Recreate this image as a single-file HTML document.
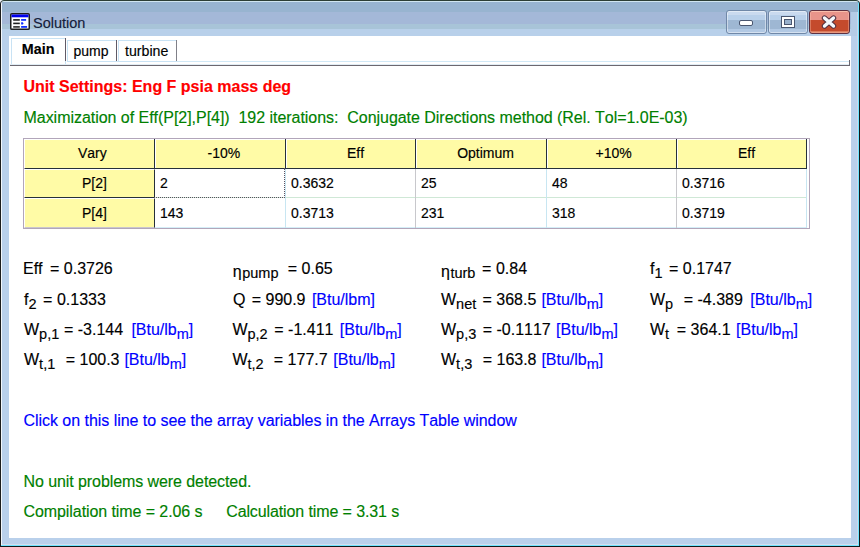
<!DOCTYPE html>
<html><head><meta charset="utf-8">
<style>
*{margin:0;padding:0;box-sizing:border-box}
html,body{width:860px;height:547px;overflow:hidden;background:#f4f4f4}
body{position:relative;font-family:"Liberation Sans",sans-serif;color:#000;font-variant-ligatures:none;font-kerning:none}
.abs{position:absolute}
.t{position:absolute;white-space:pre;font-size:16px;line-height:20px;-webkit-text-stroke:0.15px currentColor}
.tt{position:absolute;white-space:pre;font-size:14px;line-height:16px;-webkit-text-stroke:0.15px currentColor}
.g{color:#008000}
.b{color:#0000ff}
.sub{font-size:14.5px;position:relative;top:4px}
.eta{font-size:16px;position:relative;top:3px;margin-right:0.5px}
</style></head><body>
<div class="abs" style="left:0;top:0;width:860px;height:547px;border-radius:4px 4px 0 0;overflow:hidden;background:#b9d0eb">
<div class="abs" style="left:1px;top:2px;width:858px;height:10px;background:#98b4d0"></div>
<div class="abs" style="left:1px;top:12px;width:850px;height:12px;background:#a4b8d8"></div>
<div class="abs" style="left:1px;top:24px;width:850px;height:5px;background:#a8c4d8"></div>
<div class="abs" style="left:1px;top:29px;width:850px;height:7px;background:#b8d0ea"></div>
<div class="abs" style="left:851px;top:12px;width:8px;height:24px;background:#b4cce6"></div>
<div class="abs" style="left:1px;top:1px;width:858px;height:1px;background:#d0e6f0"></div>
<div class="abs" style="left:1px;top:2px;width:1px;height:544px;background:#f2f7fc"></div>
<div class="abs" style="left:858px;top:2px;width:1px;height:544px;background:#70e4ff"></div>
<div class="abs" style="left:857px;top:12px;width:1px;height:532px;background:#cad8ec"></div>
<div class="abs" style="left:1px;top:545px;width:858px;height:1px;background:#70e4ff"></div>
<div class="abs" style="left:2px;top:544px;width:856px;height:1px;background:#d4dcec"></div>
<div class="abs" style="left:0;top:0;width:860px;height:547px;border:1px solid;border-color:#2c3e34 #101818 #101818 #1c1c1c;border-radius:4px 4px 0 0"></div>
</div>
<div class="abs" style="left:9px;top:36px;width:842px;height:502px;background:#fff"></div>
<svg class="abs" style="left:10px;top:13px" width="20" height="17" viewBox="0 0 20 17">
<rect x="0.75" y="0.75" width="18.5" height="15.5" rx="1.1" fill="#fff" stroke="#1e1e1e" stroke-width="1.5"/>
<rect x="1.5" y="1.5" width="17" height="2.8" fill="#0000f0"/>
<rect x="3.2" y="6" width="6.6" height="1.8" fill="#303030"/>
<rect x="3.2" y="9.6" width="6.6" height="1.6" fill="#202020"/>
<rect x="3.2" y="13" width="6.6" height="1.8" fill="#404040"/>
<rect x="11.1" y="6" width="5" height="1.8" fill="#1030ff"/>
<path d="M11.1 9.3 L12.8 9.3 L13.6 10.4 L12.8 11.5 L11.1 11.5 Z" fill="#1030ff"/>
<rect x="11.1" y="13" width="6" height="1.8" fill="#1030ff"/>
</svg>
<div class="t" style="left:33px;top:13px;font-size:14.5px;color:#14203a">Solution</div>
<div class="abs" style="left:726px;top:10px;width:41px;height:24px;border:1px solid #7088a8;border-radius:3px;background:linear-gradient(#cadaef 0,#cadaef 4px,#b9d0ea 4px,#b9d0ea 9px,#9eb7d3 9px,#9eb7d3 18px,#b2c9e4 18px);box-shadow:inset 0 0 0 1px rgba(255,255,255,.45)"></div>
<div class="abs" style="left:739px;top:20px;width:14px;height:6px;border:1px solid #4a5670;border-radius:2px;background:#fff"></div>
<div class="abs" style="left:768px;top:10px;width:40px;height:24px;border:1px solid #7088a8;border-radius:3px;background:linear-gradient(#cadaef 0,#cadaef 4px,#b9d0ea 4px,#b9d0ea 9px,#9eb7d3 9px,#9eb7d3 18px,#b2c9e4 18px);box-shadow:inset 0 0 0 1px rgba(255,255,255,.45)"></div>
<div class="abs" style="left:781px;top:16px;width:14px;height:12px;border:1px solid #4a5670;background:#fff"></div>
<div class="abs" style="left:784px;top:19px;width:8px;height:6px;border:1px solid #4a5670;background:#98b0cc"></div>
<div class="abs" style="left:809px;top:10px;width:41px;height:24px;border:1px solid #5e3040;border-radius:3px;background:linear-gradient(#f4b4a4 0,#f4b4a4 1px,#e8948a 1px,#e8948a 9px,#c44a2c 9px,#c44a2c 20px,#dc7a5c 20px);box-shadow:inset 0 0 0 1px rgba(255,210,190,.35)"></div>
<svg class="abs" style="left:820px;top:13px" width="18" height="18" viewBox="0 0 18 18">
<path d="M4.5 5 L13.5 13 M13.5 5 L4.5 13" stroke="#503040" stroke-width="5.4" stroke-linecap="round"/>
<path d="M4.5 5 L13.5 13 M13.5 5 L4.5 13" stroke="#f4f8fc" stroke-width="3.4" stroke-linecap="round"/>
</svg>
<div class="abs" style="left:67px;top:61px;width:782px;height:1px;background:#d0e8f6"></div>
<div class="abs" style="left:10px;top:64px;width:839px;height:1px;background:#e0ecf4"></div>
<div class="abs" style="left:10px;top:65px;width:840px;height:1px;background:#6c6870"></div>
<div class="abs" style="left:849px;top:60px;width:1px;height:6px;background:#6c6870"></div>
<div class="abs" style="left:11px;top:38px;width:55px;height:26px;border:1px solid #c8e2f4;border-bottom:none;background:#fff"></div>
<div class="abs" style="left:65px;top:38px;width:1px;height:23px;background:#605a66"></div>
<div class="abs" style="left:67px;top:40px;width:50px;height:22px;border:1px solid #c8e2f4;border-right:none"></div>
<div class="abs" style="left:116px;top:40px;width:1px;height:21px;background:#605a66"></div>
<div class="abs" style="left:118px;top:40px;width:59px;height:22px;border:1px solid #c8e2f4;border-right:none"></div>
<div class="abs" style="left:176px;top:40px;width:1px;height:21px;background:#808088"></div>
<div class="t" style="left:21.8px;top:39px;font-size:14.3px;font-weight:bold">Main</div>
<div class="t" style="left:73.5px;top:41px;font-size:14px">pump</div>
<div class="t" style="left:125px;top:41px;font-size:14.2px">turbine</div>
<div class="t" style="left:23.5px;top:77px;font-weight:bold;color:#ff0000">Unit Settings: Eng F psia mass deg</div>
<div class="t g" style="left:23.5px;top:107.5px;letter-spacing:-0.035px">Maximization of Eff(P[2],P[4])  192 iterations:  Conjugate Directions method (Rel. Tol=1.0E-03)</div>
<div class="abs" style="left:23px;top:138px;width:787px;height:91px;border:1px solid #b2a6ba;background:#fff"></div>
<div class="abs" style="left:24px;top:139px;width:783px;height:30px;background:#fffba6;border-left:1px solid #fff;border-top:1px solid #fff;border-bottom:1px solid #26303a"></div>
<div class="abs" style="left:24px;top:169px;width:131px;height:29px;background:#fffba6;border-left:1px solid #fff;border-top:1px solid #fff;border-bottom:1px solid #26303a;border-right:1px solid #26303a"></div>
<div class="abs" style="left:24px;top:198px;width:131px;height:30px;background:#fffba6;border-left:1px solid #fff;border-top:1px solid #fff;border-bottom:1px solid #cac6ce;border-right:1px solid #26303a"></div>
<div class="abs" style="left:154px;top:139px;width:1px;height:30px;background:#26303a"></div>
<div class="abs" style="left:155px;top:140px;width:1px;height:28px;background:#fff"></div>
<div class="abs" style="left:285px;top:139px;width:1px;height:30px;background:#26303a"></div>
<div class="abs" style="left:286px;top:140px;width:1px;height:28px;background:#fff"></div>
<div class="abs" style="left:415px;top:139px;width:1px;height:30px;background:#26303a"></div>
<div class="abs" style="left:416px;top:140px;width:1px;height:28px;background:#fff"></div>
<div class="abs" style="left:546px;top:139px;width:1px;height:30px;background:#26303a"></div>
<div class="abs" style="left:547px;top:140px;width:1px;height:28px;background:#fff"></div>
<div class="abs" style="left:676px;top:139px;width:1px;height:30px;background:#26303a"></div>
<div class="abs" style="left:677px;top:140px;width:1px;height:28px;background:#fff"></div>
<div class="abs" style="left:806px;top:139px;width:1px;height:30px;background:#26303a"></div>
<div class="abs" style="left:155px;top:197px;width:652px;height:1px;background:#cfe8d6"></div>
<div class="abs" style="left:155px;top:227px;width:652px;height:1px;background:#d4eef8"></div>
<div class="abs" style="left:285px;top:169px;width:1px;height:59px;background:#c8e6f2"></div>
<div class="abs" style="left:415px;top:169px;width:1px;height:59px;background:#c8c8cc"></div>
<div class="abs" style="left:546px;top:169px;width:1px;height:59px;background:#c8e6f2"></div>
<div class="abs" style="left:676px;top:169px;width:1px;height:59px;background:#c8c8cc"></div>
<div class="abs" style="left:806px;top:169px;width:1px;height:59px;background:#c8e6f2"></div>
<div class="abs" style="left:154px;top:168px;width:131px;height:30px;border-right:1px dotted #5a5060;border-bottom:1px dotted #5a5060"></div>
<div class="tt" style="left:78px;top:145px;">Vary</div>
<div class="tt" style="left:207.5px;top:145px;">-10%</div>
<div class="tt" style="left:347px;top:145px;">Eff</div>
<div class="tt" style="left:457.2px;top:145px;">Optimum</div>
<div class="tt" style="left:595.5px;top:145px;">+10%</div>
<div class="tt" style="left:738px;top:145px;">Eff</div>
<div class="tt" style="left:82px;top:175px;">P[2]</div>
<div class="tt" style="left:160px;top:175px;">2</div>
<div class="tt" style="left:291px;top:175px;">0.3632</div>
<div class="tt" style="left:421px;top:175px;">25</div>
<div class="tt" style="left:552px;top:175px;">48</div>
<div class="tt" style="left:682px;top:175px;">0.3716</div>
<div class="tt" style="left:82px;top:205px;">P[4]</div>
<div class="tt" style="left:160px;top:205px;">143</div>
<div class="tt" style="left:291px;top:205px;">0.3713</div>
<div class="tt" style="left:421px;top:205px;">231</div>
<div class="tt" style="left:552px;top:205px;">318</div>
<div class="tt" style="left:682px;top:205px;">0.3719</div>
<div class="t" style="left:23px;top:259px;">Eff</div>
<div class="t" style="left:50.0px;top:259px;">= 0.3726</div>
<div class="t" style="left:232.8px;top:259px;"><span class="eta">&#951;</span><span class="sub">pump</span></div>
<div class="t" style="left:287.8px;top:259px;">= 0.65</div>
<div class="t" style="left:441px;top:259px;"><span class="eta">&#951;</span><span class="sub">turb</span></div>
<div class="t" style="left:482.1px;top:259px;">= 0.84</div>
<div class="t" style="left:650px;top:259px;">f<span class="sub">1</span></div>
<div class="t" style="left:669px;top:259px;">= 0.1747</div>
<div class="t" style="left:24px;top:290px;">f<span class="sub">2</span></div>
<div class="t" style="left:43.1px;top:290px;">= 0.1333</div>
<div class="t" style="left:233px;top:290px;">Q</div>
<div class="t" style="left:251.7px;top:290px;">= 990.9</div>
<div class="t b" style="left:311.9px;top:290px;">[Btu/lbm]</div>
<div class="t" style="left:441px;top:290px;">W<span class="sub">net</span></div>
<div class="t" style="left:482.5px;top:290px;">= 368.5</div>
<div class="t b" style="left:541.4px;top:290px;">[Btu/lb<span class="sub">m</span>]</div>
<div class="t" style="left:650px;top:290px;">W<span class="sub">p</span></div>
<div class="t" style="left:683.7px;top:290px;">= -4.389</div>
<div class="t b" style="left:750.3px;top:290px;">[Btu/lb<span class="sub">m</span>]</div>
<div class="t" style="left:24px;top:320px;">W<span class="sub">p,1</span></div>
<div class="t" style="left:64.0px;top:320px;">= -3.144</div>
<div class="t b" style="left:131.4px;top:320px;">[Btu/lb<span class="sub">m</span>]</div>
<div class="t" style="left:232.4px;top:320px;">W<span class="sub">p,2</span></div>
<div class="t" style="left:274.3px;top:320px;">= -1.411</div>
<div class="t b" style="left:339.8px;top:320px;">[Btu/lb<span class="sub">m</span>]</div>
<div class="t" style="left:441px;top:320px;">W<span class="sub">p,3</span></div>
<div class="t" style="left:482.7px;top:320px;">= -0.1117</div>
<div class="t b" style="left:556.1px;top:320px;">[Btu/lb<span class="sub">m</span>]</div>
<div class="t" style="left:650px;top:320px;">W<span class="sub">t</span></div>
<div class="t" style="left:676.8px;top:320px;">= 364.1</div>
<div class="t b" style="left:736.1px;top:320px;">[Btu/lb<span class="sub">m</span>]</div>
<div class="t" style="left:24px;top:350px;">W<span class="sub">t,1</span></div>
<div class="t" style="left:65.7px;top:350px;">= 100.3</div>
<div class="t b" style="left:124.4px;top:350px;">[Btu/lb<span class="sub">m</span>]</div>
<div class="t" style="left:232.4px;top:350px;">W<span class="sub">t,2</span></div>
<div class="t" style="left:273.8px;top:350px;">= 177.7</div>
<div class="t b" style="left:333.3px;top:350px;">[Btu/lb<span class="sub">m</span>]</div>
<div class="t" style="left:441px;top:350px;">W<span class="sub">t,3</span></div>
<div class="t" style="left:482.7px;top:350px;">= 163.8</div>
<div class="t b" style="left:541.4px;top:350px;">[Btu/lb<span class="sub">m</span>]</div>
<div class="t b" style="left:23.5px;top:411px;letter-spacing:-0.04px">Click on this line to see the array variables in the Arrays Table window</div>
<div class="t g" style="left:23.5px;top:472px;letter-spacing:-0.08px">No unit problems were detected.</div>
<div class="t g" style="left:23.5px;top:502px;letter-spacing:-0.08px">Compilation time = 2.06 s</div>
<div class="t g" style="left:226.2px;top:502px;letter-spacing:-0.11px">Calculation time = 3.31 s</div>
</body></html>
